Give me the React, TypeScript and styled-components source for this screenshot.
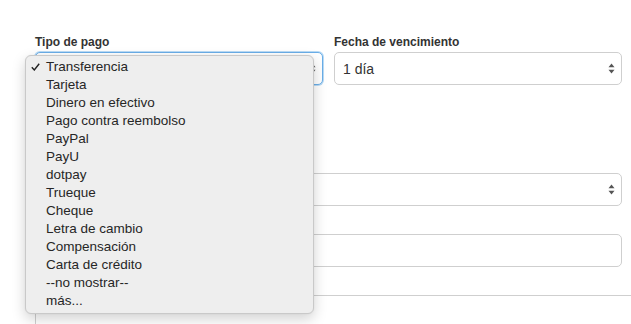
import React from "react";
import styled, { createGlobalStyle } from "styled-components";

const Global = createGlobalStyle`
  html, body { margin: 0; padding: 0; background: #fff; overflow: hidden; }
  body { font-family: "Liberation Sans", Arial, sans-serif; color: #333; }
`;

const Page = styled.div`
  position: relative;
  width: 631px;
  height: 324px;
  overflow: hidden;
  padding: 35px 0 0 35px;
  box-sizing: border-box;
`;

const Row = styled.div`
  display: grid;
  grid-template-columns: 288px 288px;
  column-gap: 11px;
`;

const Field = styled.div<{ $top?: number }>`
  display: flex;
  flex-direction: column;
  margin-top: ${(p) => p.$top ?? 0}px;
  width: 587px;
`;

const ColField = styled.div`
  display: flex;
  flex-direction: column;
`;

const Label = styled.label`
  font-size: 12px;
  font-weight: bold;
  line-height: 14px;
  color: #333;
  margin-bottom: 3px;
`;

const SelectBox = styled.div<{ $focus?: boolean }>`
  box-sizing: border-box;
  height: 33px;
  border: 1px solid ${(p) => (p.$focus ? "#6aaee8" : "#cfcfcf")};
  border-radius: 5px;
  box-shadow: ${(p) => (p.$focus ? "0 0 0 1px rgba(102,175,233,0.45)" : "none")};
  display: flex;
  align-items: center;
  justify-content: space-between;
  padding: 0 6px 0 8px;
  font-size: 14px;
  color: #333;
  background: #fff;
`;

const InputBox = styled.div`
  box-sizing: border-box;
  height: 33px;
  border: 1px solid #cfcfcf;
  border-radius: 5px;
  background: #fff;
`;

const Section = styled.div`
  margin-top: 28px;
  height: 60px;
  width: 700px;
  border-top: 1px solid #cfcfcf;
  border-left: 1px solid #cfcfcf;
`;

const Menu = styled.ul`
  position: absolute;
  left: 25px;
  top: 55px;
  width: 289px;
  height: 259px;
  box-sizing: border-box;
  margin: 0;
  padding: 2px 0 0 0;
  list-style: none;
  background: #eeeeee;
  border: 1px solid #c9c9c9;
  border-radius: 6px;
  box-shadow: 0 5px 14px rgba(0, 0, 0, 0.18), 0 0 2px rgba(0, 0, 0, 0.06);
`;

const Item = styled.li`
  position: relative;
  height: 18px;
  line-height: 18px;
  padding-left: 20px;
  font-size: 13.5px;
  color: #262626;
  font-family: "Liberation Sans", Arial, sans-serif;
`;

const Check = styled.svg`
  position: absolute;
  left: 5px;
  top: 5px;
`;

const Arrows = () => (
  <svg width="7" height="11" viewBox="0 0 7 11">
    <path d="M3.5 0.5 L6.5 4.3 L0.5 4.3 Z" fill="#555" />
    <path d="M3.5 10.5 L6.5 6.7 L0.5 6.7 Z" fill="#555" />
  </svg>
);

const options = [
  "Transferencia",
  "Tarjeta",
  "Dinero en efectivo",
  "Pago contra reembolso",
  "PayPal",
  "PayU",
  "dotpay",
  "Trueque",
  "Cheque",
  "Letra de cambio",
  "Compensación",
  "Carta de crédito",
  "--no mostrar--",
  "más...",
];

export default function App() {
  return (
    <>
      <Global />
      <Page>
        <Row>
          <ColField>
            <Label>Tipo de pago</Label>
            <SelectBox $focus>
              <span />
              <Arrows />
            </SelectBox>
          </ColField>
          <ColField>
            <Label>Fecha de vencimiento</Label>
            <SelectBox>
              <span>1 día</span>
              <Arrows />
            </SelectBox>
          </ColField>
        </Row>
        <Field $top={88}>
          <SelectBox>
            <span />
            <Arrows />
          </SelectBox>
        </Field>
        <Field $top={28}>
          <InputBox />
        </Field>
        <Section />
        <Menu>
          {options.map((o, i) => (
            <Item key={o}>
              {i === 0 && (
                <Check width="9" height="8" viewBox="0 0 9 8">
                  <path d="M0.8 4.3 L3.3 7 L8.2 0.8" fill="none" stroke="#222" strokeWidth="1.4" />
                </Check>
              )}
              {o}
            </Item>
          ))}
        </Menu>
      </Page>
    </>
  );
}
